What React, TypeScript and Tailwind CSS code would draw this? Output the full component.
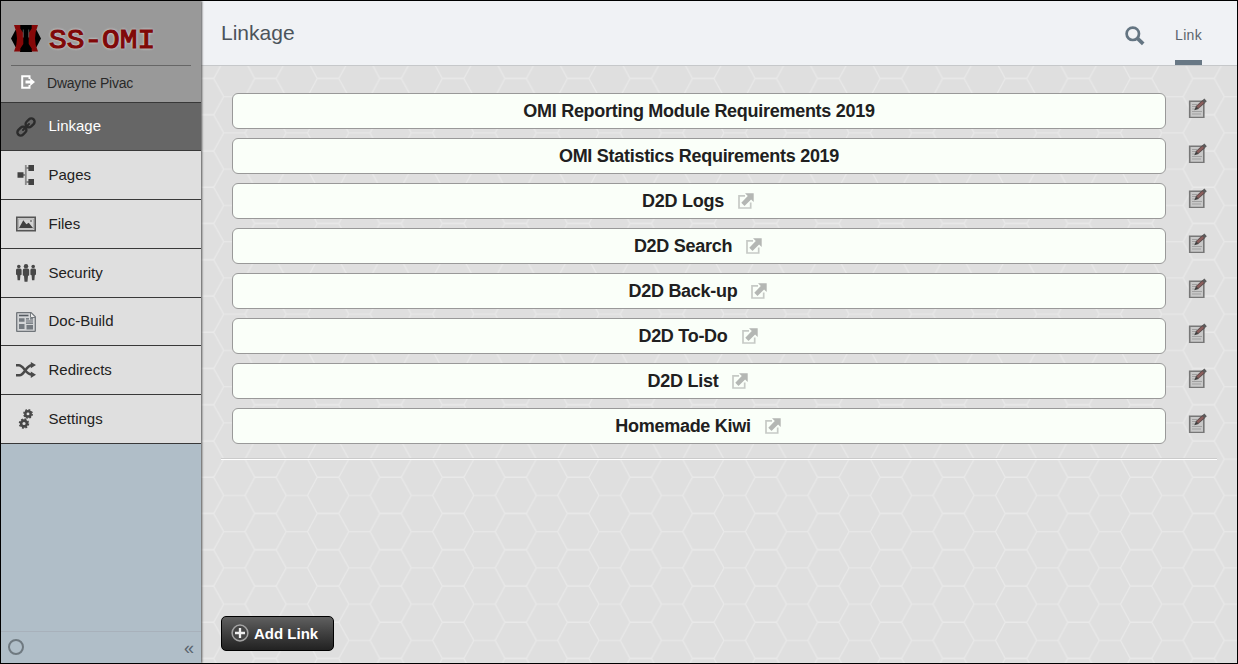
import type { ReactNode } from "react";

const links = [
  { title: "OMI Reporting Module Requirements 2019", external: false },
  { title: "OMI Statistics Requirements 2019", external: false },
  { title: "D2D Logs", external: true },
  { title: "D2D Search", external: true },
  { title: "D2D Back-up", external: true },
  { title: "D2D To-Do", external: true },
  { title: "D2D List", external: true },
  { title: "Homemade Kiwi", external: true },
];

function Icon({ children }: { children: ReactNode }) {
  return (
    <svg viewBox="0 0 20 20" width="20" height="20" className="shrink-0">
      {children}
    </svg>
  );
}

function ChainIcon() {
  return (
    <Icon>
      <g fill="none" stroke="#2b2b2b" strokeWidth="2.4">
        <rect x="-5" y="-3.3" width="10" height="6.6" rx="3.3" transform="translate(14.100 5.900) rotate(-45)" />
        <rect x="-5" y="-3.3" width="10" height="6.6" rx="3.3" transform="translate(5.900 14.100) rotate(-45)" />
      </g>
      <path d="M7 13 13 7" stroke="#2b2b2b" strokeWidth="2" strokeLinecap="round" />
    </Icon>
  );
}

function TreeIcon() {
  return (
    <Icon>
      <path d="M7 10h3M9.800 0v20M10 3h3M10 17h3" fill="none" stroke="#8a8a8a" strokeWidth="1.800" />
      <path d="M1.500 7.200h6v5.600h-6zM12.400 0H18v5.900h-5.600zM12.400 14H18v6h-5.600z" fill="#424242" />
    </Icon>
  );
}

function PictureIcon() {
  return (
    <Icon>
      <path d="M.8 3.300h18.400v13.400H.8z" fill="#d4d4d4" stroke="#555" strokeWidth="1.600" />
      <path d="M2.500 5h15v10h-15z" fill="none" stroke="#999" strokeWidth=".6" />
      <path d="M3 14 7.300 6.300l3.100 4 2.300-1.500L17 14z" fill="#414141" />
      <circle cx="15" cy="7" r="1" fill="#777" />
    </Icon>
  );
}

function PeopleIcon() {
  return (
    <Icon>
      <g fill="#484848">
        <circle cx="2.800" cy="3.500" r="1.800" />
        <circle cx="17.200" cy="3.500" r="1.800" />
        <circle cx="10" cy="3.200" r="2.200" />
        <path d="M0 7q0-1.600 1.500-1.600h2.600Q5.600 5.400 5.600 7v4.800l-1.200.5-.4 5H1.600l-.4-5L0 11.500zM14.400 7q0-1.600 1.500-1.600h2.600Q20 5.400 20 7v4.500l-1.200.8-.4 5H16l-.4-5-1.200-.5zM6.800 7.300q0-1.700 1.600-1.700h3.200q1.600 0 1.600 1.700v5l-1.200.8-.5 5.600h-3l-.5-5.600-1.200-.8z" />
      </g>
    </Icon>
  );
}

function NewspaperIcon() {
  return (
    <Icon>
      <path d="M.7 1.200q0-.6.6-.6H15l4.300 4.200v14q0 .6-.6.6H1.300q-.6 0-.6-.6z" fill="#d3d5d7" stroke="#70757a" strokeWidth="1.300" />
      <path d="M14.500 1v4.500H19" fill="#eee" stroke="#777c80" />
      <path d="M3 3.500h9.500" stroke="#555b61" strokeWidth="1.600" />
      <path d="M3 6.300h5.500v3.500H3zM3 12h5.500v5H3zM10.500 13H17v4.500h-6.500z" fill="#747a80" />
      <path d="M10 6.800h3M10 9h7M10 11.200h7M14 6.800h3" stroke="#626970" strokeWidth="1.200" />
    </Icon>
  );
}

function ShuffleIcon() {
  return (
    <Icon>
      <path d="M0 5.300h2.800C7.800 5.300 9.500 14.600 16 14.600M0 15.200h3.500C9 15.200 9.500 5.200 16 5.200" fill="none" stroke="#494949" strokeWidth="2.400" />
      <path d="m14.800 1.900 5.200 3.200-5.200 3.200zM14.800 11.500l5.200 3.200-5.200 3.200z" fill="#494949" />
    </Icon>
  );
}

function GearsIcon() {
  return (
    <Icon>
      <g fill="none" stroke="#484848">
        <circle cx="12" cy="4.900" r="2.700" strokeWidth="2.500" />
        <circle cx="12" cy="4.900" r="4.200" strokeWidth="1.400" strokeDasharray="1.800 1.499" />
        <circle cx="8" cy="14.500" r="2.900" strokeWidth="2.600" />
        <circle cx="8" cy="14.500" r="4.500" strokeWidth="1.500" strokeDasharray="1.900 1.634" />
      </g>
    </Icon>
  );
}

function ExternalIcon() {
  return (
    <svg viewBox="0 0 16 16" width="16" height="16" className="mr-[2px] ml-[14px] shrink-0">
      <path d="M7 2.800H1v12.200h11.700V9.500" fill="none" stroke="#c6cac6" strokeWidth="1.700" />
      <path d="M7 .3h8.700V9l-2.600-2.600-6.600 6.500-3.200-3.200 6.500-6.600z" fill="#b4b7b4" />
    </svg>
  );
}

function EditIcon() {
  return (
    <svg viewBox="0 0 19 20" width="19" height="20" className="shrink-0">
      <path d="M1.700 3.200h14.100v16.300H1.700z" fill="#c8c8c8" stroke="#777" strokeWidth="1.600" />
      <path d="M4 6.500h5M4 8.500h4M4 11h3M4 13.500h10M4 16h9" stroke="#a1a1a1" strokeWidth="1" />
      <path d="m6.300 12.300 1.700-4 2.600 2.600z" fill="#3c3c3c" />
      <path d="m8.900 9.700 7-6.200" stroke="#5a4b4b" strokeWidth="3.800" />
      <path d="m9.500 9.100 5.700-5.100" stroke="#8d5e5c" strokeWidth="2.200" />
      <path d="m15.400 3.800 2.200-2" stroke="#5b5b5b" strokeWidth="3.600" />
    </svg>
  );
}

const navigation: { label: string; icon: ReactNode; height: string; active?: boolean }[] = [
  { label: "Linkage", icon: <ChainIcon />, height: "h-[48px]", active: true },
  { label: "Pages", icon: <TreeIcon />, height: "h-[49px]" },
  { label: "Files", icon: <PictureIcon />, height: "h-[49px]" },
  { label: "Security", icon: <PeopleIcon />, height: "h-[49px]" },
  { label: "Doc-Build", icon: <NewspaperIcon />, height: "h-[48px]" },
  { label: "Redirects", icon: <ShuffleIcon />, height: "h-[49px]" },
  { label: "Settings", icon: <GearsIcon />, height: "h-[49px]" },
];

function Logo() {
  return (
    <svg viewBox="0 0 30 27" width="30" height="27" className="mt-[2px] shrink-0">
      <path d="M0 13.500 4.500 5h21l4.500 8.500-4.500 8.500h-21zM9 0h12v27H9z" fill="#000" />
      <path
        d="M3 0h6.300v3.500L12.300 8v11l-3 4.500V26.500H3Q6 20 6 13.500T3 0zM27 0h-6.300v3.500L17.700 8v11l3 4.500v3H27Q24 20 24 13.500T27 0z"
        fill="#850808"
      />
      <path d="M12.300 4.500v8M17.700 4.500v8" stroke="#888" strokeWidth=".6" />
    </svg>
  );
}

function Honeycomb() {
  return (
    <svg className="absolute inset-0 h-full w-full" aria-hidden="true">
      <defs>
        <pattern id="honeycomb" width="62.540" height="36.250" x="22.700" y="3.500" patternUnits="userSpaceOnUse">
          <g fill="none" stroke="#eaeaea" strokeWidth="1.100">
            <path d="M31 9 21.300 27.125 31 45.250M31 9 21.300-9.125M52.500 9l10.040 18.125L52.500 45.250M52.500 9 62.540-9.125" />
            <path d="M0 27.125h21.300" stroke="#e8e8e8" />
            <path d="M31 9h21.500" stroke="#ededed" strokeWidth="1.200" />
          </g>
        </pattern>
      </defs>
      <rect width="100%" height="100%" fill="url(#honeycomb)" />
    </svg>
  );
}

function Sidebar() {
  return (
    <aside className="relative z-10 flex w-[200px] shrink-0 flex-col bg-[#b0bec8] shadow-[1px_0_2px_#555]">
      <div className="h-[101px] bg-[#999] px-[10px]">
        <div className="flex h-[65px] items-center border-b border-[#666] pt-[9px]">
          <Logo />
          <span className="ml-[8px] origin-bottom scale-y-[0.92] pt-[3px] font-['Liberation_Mono',monospace] text-[29.500px] leading-[30px] text-[#800808] [-webkit-text-stroke:1.200px_#800808] [text-shadow:0_0_3px_#eee,0_0_3px_#ccc]">
            SS-OMI
          </span>
        </div>
        <div className="flex h-[35px] items-center pl-[10px] text-[14px] tracking-[-0.220px] text-[#292929]">
          <svg viewBox="0 0 14 14" width="14" height="14" className="mb-[4px]">
            <path d="M8.500 4V1.200H1.200v11.600h7.300V10" fill="none" stroke="#fff" strokeWidth="2" />
            <path d="M4.500 5.500h4.700V3L14 7l-4.800 4V8.500H4.500z" fill="#fff" />
          </svg>
          <span className="ml-3">Dwayne Pivac</span>
        </div>
      </div>
      <nav className="border-b border-[#383838]">
        {navigation.map((item) => (
          <a
            key={item.label}
            className={
              "flex items-center gap-[12.500px] border-t border-[#383838] pl-[15px] text-[15px] " +
              item.height +
              (item.active ? " bg-[#666] text-white" : " bg-[#dfdfdf] text-[#222]")
            }
          >
            {item.icon}
            <span>{item.label}</span>
          </a>
        ))}
      </nav>
      <footer className="mt-auto flex h-[32px] items-center justify-between border-t border-[#a8b1bb] pr-[7px] pl-[7px] text-[#59646e]">
        <span className="mb-[1px] size-[16px] rounded-full border-2 border-[#6f7980]" />
        <span className="pt-[1px] text-[18px] leading-[20px]">«</span>
      </footer>
    </aside>
  );
}

export default function App() {
  return (
    <div className="flex h-[664px] w-[1238px] overflow-hidden border border-black bg-[#dfdfdf] font-['Liberation_Sans',Arial,sans-serif]">
      <Sidebar />
      <div className="flex min-w-0 flex-1 flex-col">
        <header className="flex h-[65px] shrink-0 items-stretch border-b border-[#c6c8ca] bg-[#f0f2f5] pr-[35px] pl-[20px]">
          <h1 className="mt-[19px] text-[21px] leading-[26px] text-[#4c545b]">Linkage</h1>
          <svg viewBox="0 0 20 20" width="20" height="20" className="mt-[25px] ml-auto">
            <circle cx="7.800" cy="7.800" r="6.200" fill="none" stroke="#647582" strokeWidth="2.700" />
            <path d="m12.200 12.200 6 5.700" stroke="#647582" strokeWidth="3.700" />
          </svg>
          <a className="ml-[30px] flex w-[27px] flex-col justify-between pt-[24px] text-[14px] leading-[20px] tracking-[0.350px] text-[#5b646c]">
            Link
            <span className="h-[5px] bg-[#687885]" />
          </a>
        </header>
        <main className="relative flex min-h-0 flex-1 flex-col items-start pr-[19px] pb-[12px] pl-[20px]">
          <Honeycomb />
          <ul className="relative flex w-full flex-col gap-[9px] pt-[27px] pl-[11px]">
            {links.map((link) => (
              <li key={link.title} className="flex h-[36px] items-center">
                <a className="flex h-full w-[934px] items-center justify-center rounded-[6px] border border-[#999] bg-[#fafff9] text-[18px] font-bold tracking-[-0.280px] text-[#202020]">
                  {link.title}
                  {link.external && <ExternalIcon />}
                </a>
                <span className="mb-[7px] ml-[22px]">
                  <EditIcon />
                </span>
              </li>
            ))}
          </ul>
          <hr className="relative mt-[14px] h-[2px] w-[996px] border-t border-b border-t-[#cbcbcb] border-b-white" />
          <button className="relative mt-auto flex h-[35px] w-[113px] items-center rounded-[5px] border border-black bg-linear-to-b from-[#606060] to-[#222] pl-[9px] text-[15px] font-bold text-white">
            <svg viewBox="0 0 18 18" width="18" height="18" className="mb-[1px] shrink-0">
              <circle cx="9" cy="9" r="7.900" fill="#454545" stroke="#a4a4a4" strokeWidth="1.500" />
              <path d="M9 4v10M4 9h10" stroke="#eee" strokeWidth="2.300" />
            </svg>
            <span className="ml-[5px] pt-[1px]">Add Link</span>
          </button>
        </main>
      </div>
    </div>
  );
}
